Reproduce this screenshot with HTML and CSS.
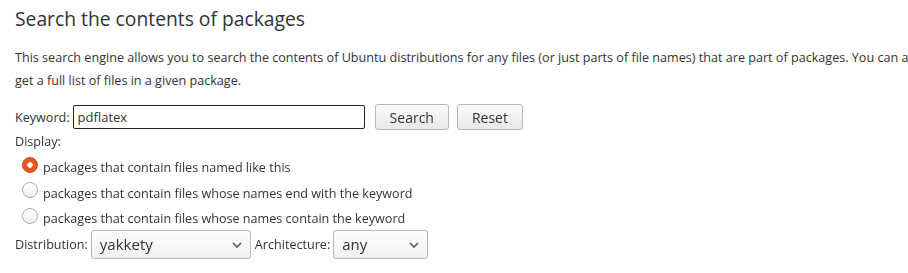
FILE: index.html
```html
<!DOCTYPE html>
<html lang="en">
  <head>
    <meta charset="UTF-8" />
    <title>Search the contents of packages</title>
    <link rel="stylesheet" href="styles.css">
  </head>
  <body>
    <h1>Search the contents of packages</h1>
    <p class="intro">This search engine allows you to search the contents of Ubuntu distributions for any files (or just parts of file names) that are part of packages. You can also get a full list of files in a given package.</p>
    <form class="search-form">
      <div class="keyword-row">
        <label for="keyword">Keyword:</label>
        <input type="text" id="keyword" class="keyword-input" value="pdflatex" autofocus />
        <button type="button" class="btn">Search</button>
        <button type="reset" class="btn">Reset</button>
      </div>
      <div class="display-label">Display:</div>
      <div class="radio-row">
        <input type="radio" name="mode" id="exact" class="radio" checked />
        <label for="exact">packages that contain files named like this</label>
      </div>
      <div class="radio-row">
        <input type="radio" name="mode" id="ends" class="radio" />
        <label for="ends">packages that contain files whose names end with the keyword</label>
      </div>
      <div class="radio-row">
        <input type="radio" name="mode" id="contains" class="radio" />
        <label for="contains">packages that contain files whose names contain the keyword</label>
      </div>
      <div class="select-row">
        <label for="dist">Distribution:</label>
        <span class="select-wrap dist-wrap">
          <select id="dist" class="select">
            <option>yakkety</option>
          </select>
          <svg class="chevron" width="10" height="6" viewBox="0 0 10 6"><path d="M1 1 L5 5 L9 1" fill="none" stroke="#555" stroke-width="1.6"/></svg>
        </span>
        <label for="arch">Architecture:</label>
        <span class="select-wrap arch-wrap">
          <select id="arch" class="select">
            <option>any</option>
          </select>
          <svg class="chevron" width="10" height="6" viewBox="0 0 10 6"><path d="M1 1 L5 5 L9 1" fill="none" stroke="#555" stroke-width="1.6"/></svg>
        </span>
      </div>
    </form>
  </body>
</html>
```

FILE: styles.css
```css
body {
  margin: 0;
  padding: 0 15px;
  font-family: "Open Sans", "DejaVu Sans", sans-serif;
  font-size: 12.6px;
  color: #333;
  background: #fff;
  width: 912px;
  overflow: hidden;
}

h1 {
  font-size: 19.3px;
  font-weight: normal;
  margin: 6px 0 0 0;
  line-height: 26px;
  color: #333;
}

.intro {
  margin: 14px 0 0 0;
  line-height: 23px;
}

.search-form {
  margin-top: 12px;
}

.keyword-row {
  display: flex;
  align-items: center;
  height: 26px;
}

.keyword-input {
  width: 292px;
  height: 24px;
  box-sizing: border-box;
  margin-left: 3px;
  border: 1px solid #222;
  border-radius: 2px;
  padding: 0 4px;
  font: inherit;
  font-size: 13px;
  color: #333;
  outline: none;
  caret-color: #000;
}

.btn {
  height: 26px;
  margin-left: 10px;
  padding: 0 14px;
  font: inherit;
  font-size: 14px;
  color: #333;
  border: 1px solid #b8b8b8;
  border-radius: 3px;
  background: linear-gradient(to bottom, #fbfbfb, #e8e8e8);
}

.keyword-row .btn + .btn {
  margin-left: 8px;
}

.display-label {
  margin: 2px 0 3px 0;
  line-height: 20px;
}

.radio-row {
  display: flex;
  align-items: center;
  height: 25.5px;
  padding-left: 7px;
}

.radio {
  appearance: none;
  width: 16px;
  height: 16px;
  margin: -6px 5px 0 0;
  border-radius: 50%;
  border: 1px solid #aaa;
  background: linear-gradient(to bottom, #fff, #f0f0f0);
  box-sizing: border-box;
}

.radio:checked {
  border: 1px solid #c9471b;
  background: radial-gradient(circle, #fff 0 2.5px, #e9541f 3px);
}

.select-row {
  display: flex;
  align-items: center;
  margin-top: -2px;
}

.select-wrap {
  position: relative;
  display: inline-block;
  margin: 0 4px 0 3px;
}

.select {
  appearance: none;
  height: 29px;
  box-sizing: border-box;
  border: 1px solid #b8b8b8;
  border-radius: 3px;
  background: linear-gradient(to bottom, #fdfdfd, #f1f1f1);
  font: inherit;
  font-size: 15px;
  color: #333;
  padding: 0 8px;
}

.dist-wrap .select {
  width: 160px;
}

.arch-wrap .select {
  width: 95px;
}

.chevron {
  position: absolute;
  right: 9px;
  top: 12px;
}
```
